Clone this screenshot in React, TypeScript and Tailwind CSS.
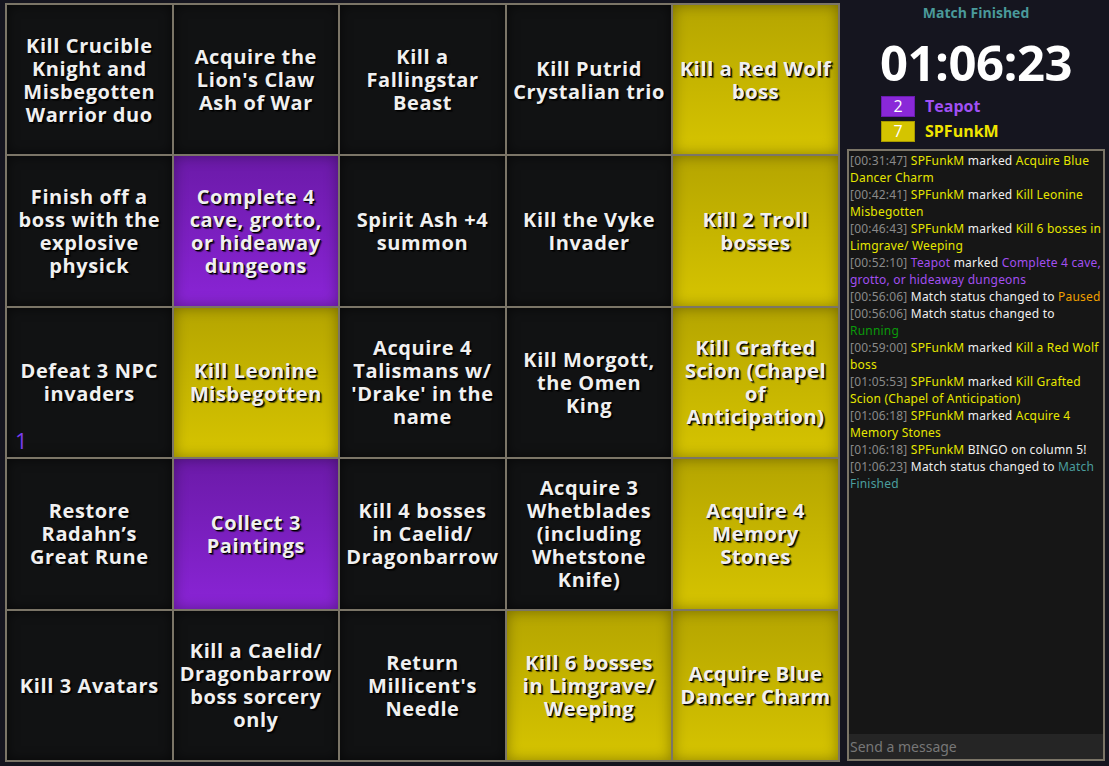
import React from 'react';

type Color = 'none' | 'yellow' | 'purple';

const cells: { text: string; color: Color; count?: number }[] = [
  { text: 'Kill Crucible Knight and Misbegotten Warrior duo', color: 'none' },
  { text: "Acquire the Lion's Claw Ash of War", color: 'none' },
  { text: 'Kill a Fallingstar Beast', color: 'none' },
  { text: 'Kill Putrid Crystalian trio', color: 'none' },
  { text: 'Kill a Red Wolf boss', color: 'yellow' },
  { text: 'Finish off a boss with the explosive physick', color: 'none' },
  { text: 'Complete 4 cave, grotto, or hideaway dungeons', color: 'purple' },
  { text: 'Spirit Ash +4 summon', color: 'none' },
  { text: 'Kill the Vyke Invader', color: 'none' },
  { text: 'Kill 2 Troll bosses', color: 'yellow' },
  { text: 'Defeat 3 NPC invaders', color: 'none', count: 1 },
  { text: 'Kill Leonine Misbegotten', color: 'yellow' },
  { text: "Acquire 4 Talismans w/ 'Drake' in the name", color: 'none' },
  { text: 'Kill Morgott, the Omen King', color: 'none' },
  { text: 'Kill Grafted Scion (Chapel of Anticipation)', color: 'yellow' },
  { text: 'Restore Radahn’s Great Rune', color: 'none' },
  { text: 'Collect 3 Paintings', color: 'purple' },
  { text: 'Kill 4 bosses\nin Caelid/ Dragonbarrow', color: 'none' },
  { text: 'Acquire 3 Whetblades (including Whetstone Knife)', color: 'none' },
  { text: 'Acquire 4 Memory Stones', color: 'yellow' },
  { text: 'Kill 3 Avatars', color: 'none' },
  { text: 'Kill a Caelid/ Dragonbarrow boss sorcery only', color: 'none' },
  { text: "Return Millicent's Needle", color: 'none' },
  { text: 'Kill 6 bosses\nin Limgrave/ Weeping', color: 'yellow' },
  { text: 'Acquire Blue Dancer Charm', color: 'yellow' },
];

const cellBg: Record<Color, string> = {
  none: 'bg-[#111213] shadow-[inset_0_0_12px_rgba(0,0,0,0.6)]',
  yellow: 'bg-gradient-to-b from-[#b5a500] to-[#d6c400] shadow-[inset_0_0_14px_rgba(0,0,0,0.35)]',
  purple: 'bg-gradient-to-b from-[#6b1aa8] to-[#8a24d6] shadow-[inset_0_0_14px_rgba(0,0,0,0.35)]',
};

type Seg = { t: string; c: string };
const Y = 'text-[#e6e600]';
const P = 'text-[#a24ff0]';
const W = 'text-[#f0f0f0]';
const G = 'text-[#8a8a8a]';

const log: Seg[][] = [
  [{ t: '[00:31:47] ', c: G }, { t: 'SPFunkM', c: Y }, { t: ' marked ', c: W }, { t: 'Acquire Blue Dancer Charm', c: Y }],
  [{ t: '[00:42:41] ', c: G }, { t: 'SPFunkM', c: Y }, { t: ' marked ', c: W }, { t: 'Kill Leonine Misbegotten', c: Y }],
  [{ t: '[00:46:43] ', c: G }, { t: 'SPFunkM', c: Y }, { t: ' marked ', c: W }, { t: 'Kill 6 bosses in Limgrave/ Weeping', c: Y }],
  [{ t: '[00:52:10] ', c: G }, { t: 'Teapot', c: P }, { t: ' marked ', c: W }, { t: 'Complete 4 cave, grotto, or hideaway dungeons', c: P }],
  [{ t: '[00:56:06] ', c: G }, { t: 'Match status changed to ', c: W }, { t: 'Paused', c: 'text-[#f0a000]' }],
  [{ t: '[00:56:06] ', c: G }, { t: 'Match status changed to ', c: W }, { t: 'Running', c: 'text-[#0a9a0a]' }],
  [{ t: '[00:59:00] ', c: G }, { t: 'SPFunkM', c: Y }, { t: ' marked ', c: W }, { t: 'Kill a Red Wolf boss', c: Y }],
  [{ t: '[01:05:53] ', c: G }, { t: 'SPFunkM', c: Y }, { t: ' marked ', c: W }, { t: 'Kill Grafted Scion (Chapel of Anticipation)', c: Y }],
  [{ t: '[01:06:18] ', c: G }, { t: 'SPFunkM', c: Y }, { t: ' marked ', c: W }, { t: 'Acquire 4 Memory Stones', c: Y }],
  [{ t: '[01:06:18] ', c: G }, { t: 'SPFunkM', c: Y }, { t: ' BINGO on column 5!', c: W }],
  [{ t: '[01:06:23] ', c: G }, { t: 'Match status changed to ', c: W }, { t: 'Match Finished', c: 'text-[#4a9e9e]' }],
];

export default function App() {
  return (
    <div className="w-[1109px] h-[766px] bg-[#15151f] flex font-['Open_Sans',sans-serif] overflow-hidden">
      <div className="pl-[5px] pt-[3px]">
        <div className="grid grid-cols-5 grid-rows-5 gap-[2px] p-[2px] bg-[#7b7567] w-[835px] h-[759px]">
          {cells.map((c, i) => (
            <div
              key={i}
              className={`relative flex items-center justify-center text-center px-[5px] ${cellBg[c.color]}`}
            >
              <span className="whitespace-pre-line text-[20px] leading-[23px] font-bold tracking-[0.6px] text-[#f0f0f0] [text-shadow:1px_1px_0_#000,2px_2px_1px_rgba(0,0,0,0.6)]">
                {c.text}
              </span>
              {c.count !== undefined && (
                <span className="absolute left-[8px] bottom-[6px] text-[22px] leading-none text-[#7a3cf0]">
                  {c.count}
                </span>
              )}
            </div>
          ))}
        </div>
      </div>

      <div className="flex-1 flex flex-col pl-[7px] pr-[4px] pb-[5px]">
        <div className="text-center text-[14px] font-bold text-[#4a9a9a] mt-[4px] leading-[18px]">Match Finished</div>
        <div className="text-center text-[49px] font-bold text-white leading-[52px] mt-[14px] tracking-[-0.5px]">01:06:23</div>
        <div className="flex flex-col gap-[4px] pl-[34px] mt-[8px]">
          <div className="flex items-center gap-[10px] h-[21px]">
            <div className="w-[34px] h-[21px] bg-[#8a28d8] border border-[#6a1cb0] text-white text-[16px] leading-[19px] text-center">2</div>
            <span className="text-[#a050f4] font-bold text-[16px] leading-[21px]">Teapot</span>
          </div>
          <div className="flex items-center gap-[10px] h-[21px]">
            <div className="w-[34px] h-[21px] bg-[#d4c400] border border-[#a89a00] text-white text-[16px] leading-[19px] text-center">7</div>
            <span className="text-[#f0e400] font-bold text-[16px] leading-[21px]">SPFunkM</span>
          </div>
        </div>
        <div className="mt-[7px] flex-1 flex flex-col border-2 border-[#7b7567] bg-[#161616]">
          <div className="flex-1 px-[1px] pt-[1px] text-[12px] leading-[17px] tracking-[0.2px] font-['Noto_Sans',sans-serif]">
            {log.map((line, i) => (
              <div key={i}>
                {line.map((s, j) => (
                  <span key={j} className={s.c}>{s.t}</span>
                ))}
              </div>
            ))}
          </div>
          <div className="h-[25px] bg-[#252525] px-[1px] flex items-center text-[14px] text-[#777] font-['Noto_Sans',sans-serif]">
            Send a message
          </div>
        </div>
      </div>
    </div>
  );
}
